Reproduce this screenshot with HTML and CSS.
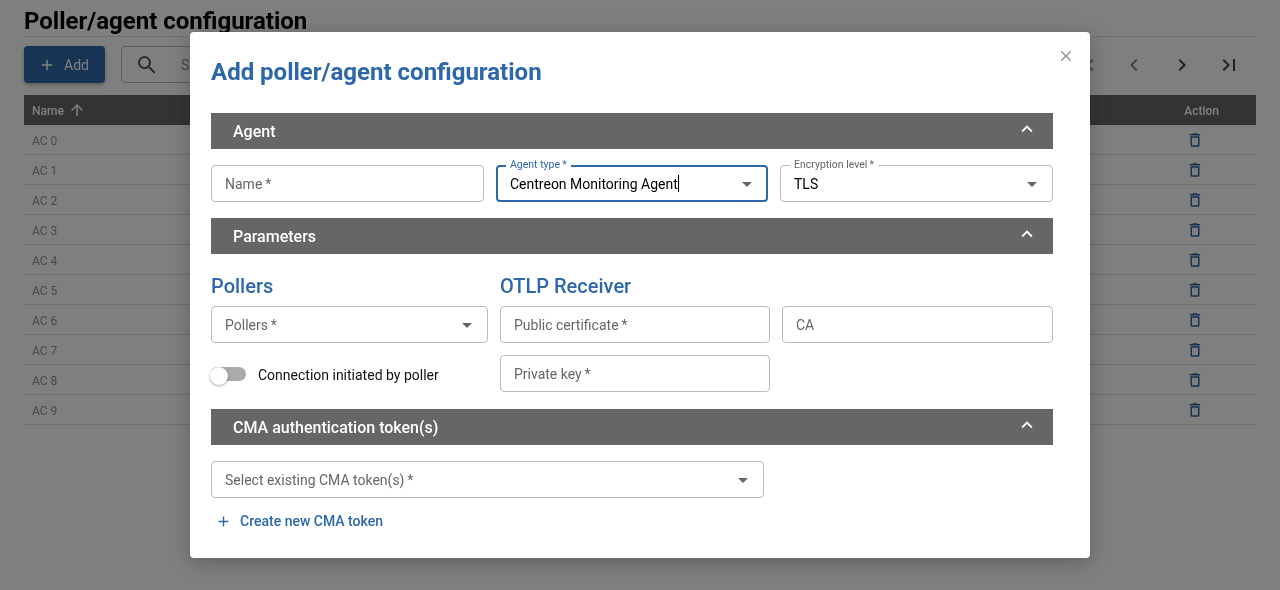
FILE: index.html
```html
<!DOCTYPE html>
<html lang="en">
<head>
    <meta charset="UTF-8">
    <meta name="viewport" content="width=device-width, initial-scale=1.0">
    <title>Poller/agent configuration</title>
    <link rel="stylesheet" href="styles.css">
</head>
<body>
    <div class="page">
        <h1 class="page-title">Poller/agent configuration</h1>
        <div class="toolbar">
            <button class="add-btn">
                <svg class="icon" viewBox="0 0 24 24"><path d="M19 13h-6v6h-2v-6H5v-2h6V5h2v6h6z"/></svg>
                Add
            </button>
            <div class="search">
                <svg class="search-icon" viewBox="0 0 24 24"><path d="M15.5 14h-.79l-.28-.27A6.47 6.47 0 0 0 16 9.5 6.5 6.5 0 1 0 9.5 16c1.61 0 3.09-.59 4.23-1.57l.27.28v.79l5 4.99L20.49 19zm-6 0C7.01 14 5 11.99 5 9.5S7.01 5 9.5 5 14 7.01 14 9.5 11.99 14 9.5 14"/></svg>
                <span class="search-text">Search</span>
            </div>
            <div class="pager">
                <svg class="pager-icon dim" viewBox="0 0 24 24"><path d="M18.41 16.59 13.82 12l4.59-4.59L17 6l-6 6 6 6zM6 6h2v12H6z"/></svg>
                <svg class="pager-icon dim" viewBox="0 0 24 24"><path d="M15.41 7.41 14 6l-6 6 6 6 1.41-1.41L10.83 12z"/></svg>
                <svg class="pager-icon" viewBox="0 0 24 24"><path d="M10 6 8.59 7.41 13.17 12l-4.58 4.59L10 18l6-6z"/></svg>
                <svg class="pager-icon" viewBox="0 0 24 24"><path d="M5.59 7.41 10.18 12l-4.59 4.59L7 18l6-6-6-6zM16 6h2v12h-2z"/></svg>
            </div>
        </div>
        <div class="table">
            <div class="table-head">
                <span class="head-name">Name
                    <svg class="sort-icon" viewBox="0 0 24 24"><path d="m4 12 1.41 1.41L11 7.83V20h2V7.83l5.58 5.59L20 12l-8-8z"/></svg>
                </span>
                <span class="head-action">Action</span>
            </div>
            <div class="table-row"><span>AC 0</span><svg class="trash" viewBox="0 0 24 24"><path d="M15.5 4l-1-1h-5l-1 1H5v2h14V4zM6 19a2 2 0 0 0 2 2h8a2 2 0 0 0 2-2V7H6zm2-10h8v10H8z"/></svg></div>
            <div class="table-row"><span>AC 1</span><svg class="trash" viewBox="0 0 24 24"><path d="M15.5 4l-1-1h-5l-1 1H5v2h14V4zM6 19a2 2 0 0 0 2 2h8a2 2 0 0 0 2-2V7H6zm2-10h8v10H8z"/></svg></div>
            <div class="table-row"><span>AC 2</span><svg class="trash" viewBox="0 0 24 24"><path d="M15.5 4l-1-1h-5l-1 1H5v2h14V4zM6 19a2 2 0 0 0 2 2h8a2 2 0 0 0 2-2V7H6zm2-10h8v10H8z"/></svg></div>
            <div class="table-row"><span>AC 3</span><svg class="trash" viewBox="0 0 24 24"><path d="M15.5 4l-1-1h-5l-1 1H5v2h14V4zM6 19a2 2 0 0 0 2 2h8a2 2 0 0 0 2-2V7H6zm2-10h8v10H8z"/></svg></div>
            <div class="table-row"><span>AC 4</span><svg class="trash" viewBox="0 0 24 24"><path d="M15.5 4l-1-1h-5l-1 1H5v2h14V4zM6 19a2 2 0 0 0 2 2h8a2 2 0 0 0 2-2V7H6zm2-10h8v10H8z"/></svg></div>
            <div class="table-row"><span>AC 5</span><svg class="trash" viewBox="0 0 24 24"><path d="M15.5 4l-1-1h-5l-1 1H5v2h14V4zM6 19a2 2 0 0 0 2 2h8a2 2 0 0 0 2-2V7H6zm2-10h8v10H8z"/></svg></div>
            <div class="table-row"><span>AC 6</span><svg class="trash" viewBox="0 0 24 24"><path d="M15.5 4l-1-1h-5l-1 1H5v2h14V4zM6 19a2 2 0 0 0 2 2h8a2 2 0 0 0 2-2V7H6zm2-10h8v10H8z"/></svg></div>
            <div class="table-row"><span>AC 7</span><svg class="trash" viewBox="0 0 24 24"><path d="M15.5 4l-1-1h-5l-1 1H5v2h14V4zM6 19a2 2 0 0 0 2 2h8a2 2 0 0 0 2-2V7H6zm2-10h8v10H8z"/></svg></div>
            <div class="table-row"><span>AC 8</span><svg class="trash" viewBox="0 0 24 24"><path d="M15.5 4l-1-1h-5l-1 1H5v2h14V4zM6 19a2 2 0 0 0 2 2h8a2 2 0 0 0 2-2V7H6zm2-10h8v10H8z"/></svg></div>
            <div class="table-row"><span>AC 9</span><svg class="trash" viewBox="0 0 24 24"><path d="M15.5 4l-1-1h-5l-1 1H5v2h14V4zM6 19a2 2 0 0 0 2 2h8a2 2 0 0 0 2-2V7H6zm2-10h8v10H8z"/></svg></div>
        </div>
    </div>

    <div class="backdrop"></div>

    <div class="dialog">
        <svg class="close" viewBox="0 0 24 24"><path d="M19 6.41 17.59 5 12 10.59 6.41 5 5 6.41 10.59 12 5 17.59 6.41 19 12 13.41 17.59 19 19 17.59 13.41 12z"/></svg>
        <h2 class="dialog-title">Add poller/agent configuration</h2>

        <div class="section-bar first">
            <span>Agent</span>
            <svg class="chevron" viewBox="0 0 24 24"><path d="M12 8l-6 6 1.41 1.41L12 10.83l4.59 4.58L18 14z"/></svg>
        </div>
        <div class="agent-row">
            <div class="field"><span class="placeholder">Name&thinsp;*</span></div>
            <div class="field focused">
                <span class="legend">Agent type&thinsp;*</span>
                <span class="value">Centreon Monitoring Agent</span><span class="caret"></span>
                <span class="arrow"></span>
            </div>
            <div class="field">
                <span class="legend">Encryption level&thinsp;*</span>
                <span class="value">TLS</span>
                <span class="arrow"></span>
            </div>
        </div>

        <div class="section-bar">
            <span>Parameters</span>
            <svg class="chevron" viewBox="0 0 24 24"><path d="M12 8l-6 6 1.41 1.41L12 10.83l4.59 4.58L18 14z"/></svg>
        </div>
        <div class="params">
            <div class="pollers">
                <h3 class="sub-title">Pollers</h3>
                <div class="field"><span class="placeholder">Pollers&thinsp;*</span><span class="arrow"></span></div>
                <div class="switch-row">
                    <span class="switch"><span class="thumb"></span></span>
                    <span class="switch-label">Connection initiated by poller</span>
                </div>
            </div>
            <div class="otlp">
                <h3 class="sub-title">OTLP Receiver</h3>
                <div class="otlp-grid">
                    <div class="field"><span class="placeholder">Public certificate&thinsp;*</span></div>
                    <div class="field"><span class="placeholder">CA</span></div>
                    <div class="field"><span class="placeholder">Private key&thinsp;*</span></div>
                </div>
            </div>
        </div>

        <div class="section-bar">
            <span>CMA authentication token(s)</span>
            <svg class="chevron" viewBox="0 0 24 24"><path d="M12 8l-6 6 1.41 1.41L12 10.83l4.59 4.58L18 14z"/></svg>
        </div>
        <div class="field token-field"><span class="placeholder">Select existing CMA token(s)&thinsp;*</span><span class="arrow"></span></div>
        <div class="create-link">
            <svg class="create-icon" viewBox="0 0 24 24"><path d="M19 13h-6v6h-2v-6H5v-2h6V5h2v6h6z"/></svg>
            Create new CMA token
        </div>
    </div>
</body>
</html>
```

FILE: styles.css
```css
* {
    box-sizing: border-box;
}
html, body {
    height: 100%;
    overflow: hidden;
}
body {
    margin: 0;
    background: #fff;
    font-family: Roboto, "Liberation Sans", sans-serif;
    color: #000;
}

/* page behind the dialog */
.page {
    padding: 0 24px;
    will-change: transform;
}
.page-title {
    margin: 0;
    height: 37px;
    padding-top: 6px;
    font-size: 24px;
    line-height: 30px;
    font-weight: 700;
    border-bottom: 1px solid #ddd;
}
.toolbar {
    display: flex;
    align-items: center;
    margin-top: 9px;
    height: 37px;
}
.add-btn {
    display: flex;
    align-items: center;
    gap: 8px;
    width: 81px;
    height: 37px;
    padding: 0 0 0 14px;
    border: 0;
    border-radius: 4px;
    background: #2e68aa;
    color: #fff;
    font-family: inherit;
    font-size: 14px;
    font-weight: 400;
    box-shadow: 0 2px 4px rgba(0, 0, 0, 0.3);
}
.icon {
    width: 18px;
    height: 18px;
    fill: #fff;
}
.search {
    display: flex;
    align-items: center;
    margin-left: 16px;
    width: 300px;
    height: 37px;
    padding-left: 13px;
    border: 1px solid #bbb;
    border-radius: 4px;
    font-size: 14px;
    color: #888;
}
.search-icon {
    width: 24px;
    height: 24px;
    fill: #555;
    margin-right: 22px;
}
.pager {
    display: flex;
    align-items: center;
    gap: 23.5px;
    margin-left: auto;
    margin-right: 15px;
}
.pager-icon {
    width: 24px;
    height: 24px;
    fill: #444;
}
.pager-icon.dim {
    fill: #888;
}
.table {
    margin-top: 12px;
}
.table-head {
    display: flex;
    align-items: center;
    justify-content: space-between;
    height: 30px;
    padding: 2px 37px 0 8px;
    background: #666;
    color: #fff;
    font-size: 12px;
    font-weight: 500;
}
.head-name {
    display: flex;
    align-items: center;
    gap: 4px;
}
.sort-icon {
    width: 18px;
    height: 18px;
    fill: #fff;
    margin-top: -2px;
}
.table-row {
    display: flex;
    align-items: center;
    justify-content: space-between;
    height: 30px;
    padding: 2px 52px 0 8px;
    border-bottom: 1px solid #ddd;
    font-size: 12px;
    color: #949494;
}
.trash {
    width: 18px;
    height: 18px;
    margin-top: -2px;
    fill: #2e68aa;
}

.backdrop {
    position: fixed;
    inset: 0;
    background: rgba(0, 0, 0, 0.5);
}

/* dialog */
.dialog {
    position: fixed;
    left: 190px;
    top: 32px;
    width: 900px;
    height: 526px;
    padding: 24px 37px 0 21px;
    background: #fff;
    border-radius: 4px;
    box-shadow: 0 4px 20px rgba(0, 0, 0, 0.25);
    will-change: transform;
}
.close {
    position: absolute;
    top: 15px;
    right: 15px;
    width: 18px;
    height: 18px;
    fill: #999;
}
.dialog-title {
    margin: 0;
    height: 32px;
    font-size: 24px;
    line-height: 32px;
    font-weight: 700;
    color: #2e68aa;
}
.section-bar {
    display: flex;
    align-items: center;
    justify-content: space-between;
    height: 36px;
    padding: 0 15px 0 22px;
    background: #666;
    color: #fff;
    font-size: 16px;
    font-weight: 500;
}
.section-bar.first {
    margin-top: 25px;
}
.chevron {
    width: 22px;
    height: 22px;
    fill: #fff;
    margin-top: -4px;
}
.agent-row {
    display: grid;
    grid-template-columns: 273px 272px 273px;
    gap: 12px;
    margin: 16px 0;
}
.field {
    position: relative;
    display: flex;
    align-items: center;
    height: 37px;
    padding: 0 13px;
    border: 1px solid #bbb;
    border-radius: 4px;
    font-size: 14px;
}
.field.focused {
    border: 2px solid #2e68aa;
    padding: 0 12px;
}
.placeholder {
    color: #666;
}
.value {
    color: #000;
}
.caret {
    width: 1px;
    height: 17px;
    background: #000;
}
.legend {
    position: absolute;
    top: -8px;
    left: 9px;
    padding: 0 4px;
    background: #fff;
    font-size: 10.5px;
    line-height: 14px;
    color: #666;
}
.focused .legend {
    top: -9px;
    left: 8px;
    color: #2e68aa;
}
.arrow {
    position: absolute;
    right: 15px;
    top: 50%;
    margin-top: -2px;
    border-left: 5px solid transparent;
    border-right: 5px solid transparent;
    border-top: 5px solid #666;
}
.focused .arrow {
    right: 14px;
}
.params {
    display: grid;
    grid-template-columns: 277px 553px;
    gap: 12px;
    margin-top: 18px;
}
.sub-title {
    margin: 0 0 6px;
    height: 28px;
    font-size: 20px;
    line-height: 28px;
    font-weight: 500;
    color: #2e68aa;
}
.otlp-grid {
    display: grid;
    grid-template-columns: 270px 271px;
    gap: 12px;
}
.switch-row {
    display: flex;
    align-items: center;
    margin-top: 19px;
    height: 26px;
}
.switch {
    position: relative;
    display: block;
    width: 35px;
    height: 14px;
    margin-bottom: 2px;
    border-radius: 7px;
    background: #aaa;
}
.thumb {
    position: absolute;
    left: -1px;
    top: 0;
    width: 18px;
    height: 18px;
    border-radius: 50%;
    background: #fff;
    box-shadow: 0 1px 3px rgba(0, 0, 0, 0.35);
}
.switch-label {
    margin-left: 12px;
    font-size: 14px;
    color: #111;
}
.params + .section-bar {
    margin-top: 17px;
}
.token-field {
    width: 553px;
    margin-top: 16px;
}
.create-link {
    display: flex;
    align-items: center;
    gap: 8px;
    margin: 13px 0 0 4px;
    height: 20px;
    font-size: 14px;
    font-weight: 500;
    color: #2e68aa;
}
.create-icon {
    width: 17px;
    height: 17px;
    fill: #2e68aa;
}
```
